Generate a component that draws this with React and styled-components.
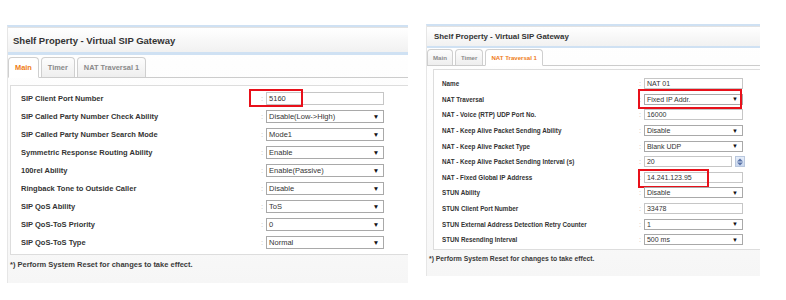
import React from 'react';
import styled, { createGlobalStyle } from 'styled-components';

const GlobalStyle = createGlobalStyle`
  body {
    margin: 0;
    background: #ffffff;
    font-family: 'Liberation Sans', Arial, sans-serif;
    color: #333333;
  }
`;

const LEFT = {
  width: 400,
  top: 25,
  left: 7,
  headerH: 24,
  blue: 3,
  titleSize: 9.5,
  titlePad: 5,
  tabsGap: 2,
  tabH: 19,
  tabFont: 7.4,
  tabPad: 6,
  boxTop: 7,
  boxSide: 2,
  rowH: 18,
  boxPadTop: 3,
  boxPadBottom: 3,
  labelSize: 7.5,
  labelPad: 10,
  labelCol: 250,
  inputW: 118,
  inputH: 13,
  valueFont: 7.5,
  footFont: 7.5,
  footPad: 5,
};

const RIGHT = {
  width: 333,
  top: 24,
  left: 18,
  headerH: 19,
  blue: 2,
  titleSize: 7.9,
  titlePad: 7,
  tabsGap: 1,
  tabH: 15,
  tabFont: 6.1,
  tabPad: 5,
  boxTop: 3,
  boxSide: 6,
  rowH: 15.6,
  boxPadTop: 6,
  boxPadBottom: 1,
  labelSize: 6.3,
  labelPad: 8,
  labelCol: 205,
  inputW: 99,
  inputH: 11,
  valueFont: 7,
  footFont: 6.8,
  footPad: 5,
};

const Page = styled.div`
  display: flex;
  align-items: flex-start;
  height: 300px;
  overflow: hidden;
`;

const Panel = styled.div`
  width: ${(p) => p.$c.width}px;
  margin-top: ${(p) => p.$c.top}px;
  margin-left: ${(p) => p.$c.left}px;
  background: linear-gradient(#ffffff, #fafafa 70%, #f6f6f6);
  border-top: 2px solid #cfe1f3;
  border-left: 1px solid #e6e6e6;
  padding-bottom: 14px;
`;

const Header = styled.div`
  height: ${(p) => p.$c.headerH}px;
  display: flex;
  align-items: center;
  padding-left: ${(p) => p.$c.titlePad}px;
  background: linear-gradient(#ffffff, #f1f1f1);
  border-bottom: ${(p) => p.$c.blue}px solid #cfe1f3;
  border-top: 1px solid #e2e2e2;
  font-size: ${(p) => p.$c.titleSize}px;
  font-weight: bold;
  color: #333;
`;

const Tabs = styled.div`
  display: flex;
  align-items: flex-end;
  gap: 2px;
  margin-top: ${(p) => p.$c.tabsGap}px;
  border-bottom: 1px solid #cccccc;
`;

const Tab = styled.div`
  height: ${(p) => p.$c.tabH}px;
  padding: 0 ${(p) => p.$c.tabPad}px;
  display: flex;
  align-items: center;
  font-size: ${(p) => p.$c.tabFont}px;
  font-weight: bold;
  color: ${(p) => (p.$active ? '#ef7d16' : '#8a8a8a')};
  background: ${(p) => (p.$active ? '#ffffff' : 'linear-gradient(#fdfdfd, #eeeeee)')};
  border: 1px solid #cfcfcf;
  border-bottom: ${(p) => (p.$active ? '1px solid #ffffff' : 'none')};
  border-radius: 4px 4px 0 0;
  margin-bottom: ${(p) => (p.$active ? '-1px' : '0')};
`;

const Box = styled.div`
  margin: ${(p) => p.$c.boxTop}px 0 0 ${(p) => p.$c.boxSide}px;
  background: #ffffff;
  border: 1px solid #dddddd;
  border-right: none;
  padding: ${(p) => p.$c.boxPadTop}px 0 ${(p) => p.$c.boxPadBottom}px;
`;

const Row = styled.div`
  display: grid;
  grid-template-columns: ${(p) => p.$c.labelCol}px auto;
  align-items: stretch;
  height: ${(p) => p.$c.rowH}px;
`;

const Label = styled.div`
  display: flex;
  align-items: center;
  padding-left: ${(p) => p.$c.labelPad}px;
  font-size: ${(p) => p.$c.labelSize}px;
  font-weight: bold;
  color: #333;
  white-space: nowrap;
`;

const Value = styled.div`
  position: relative;
  display: flex;
  align-items: center;
  gap: 3px;
  font-size: ${(p) => p.$c.valueFont}px;
`;

const Colon = styled.span`
  color: #b5b5b5;
  font-size: ${(p) => p.$c.valueFont}px;
`;

const Field = styled.div`
  width: ${(p) => p.$w}px;
  height: ${(p) => p.$c.inputH}px;
  box-sizing: border-box;
  border: 1px solid ${(p) => (p.$select ? '#a9a9a9' : '#c6c6c6')};
  background: #ffffff;
  display: flex;
  align-items: center;
  justify-content: space-between;
  padding: 0 4px 0 2px;
  font-size: ${(p) => p.$c.valueFont}px;
  color: #333;
  white-space: nowrap;
`;

const Arrow = styled.span`
  font-size: ${(p) => p.$c.valueFont - 1}px;
  color: #111;
`;

const Spinner = styled.div`
  width: 10px;
  height: ${(p) => p.$c.inputH}px;
  box-sizing: border-box;
  border: 1px solid #b9c7dd;
  background: linear-gradient(#e6eefa, #c9d7ee);
  display: flex;
  flex-direction: column;
  align-items: center;
  justify-content: center;
`;

const Highlight = styled.div`
  position: absolute;
  left: ${(p) => p.$x}px;
  top: calc(50% + ${(p) => p.$y}px);
  width: ${(p) => p.$w}px;
  height: ${(p) => p.$h}px;
  border: 2px solid #e8101a;
  box-sizing: border-box;
  pointer-events: none;
`;

const Footer = styled.div`
  padding: ${(p) => p.$c.footPad}px 0 0 2px;
  font-size: ${(p) => p.$c.footFont}px;
  font-weight: bold;
  color: #3a3a3a;
`;

const leftRows = [
  { label: 'SIP Client Port Number', value: '5160', mark: { x: -12, y: -9, w: 54, h: 18 } },
  { label: 'SIP Called Party Number Check Ability', value: 'Disable(Low->High)', select: true },
  { label: 'SIP Called Party Number Search Mode', value: 'Mode1', select: true },
  { label: 'Symmetric Response Routing Ability', value: 'Enable', select: true },
  { label: '100rel Ability', value: 'Enable(Passive)', select: true },
  { label: 'Ringback Tone to Outside Caller', value: 'Disable', select: true },
  { label: 'SIP QoS Ability', value: 'ToS', select: true },
  { label: 'SIP QoS-ToS Priority', value: '0', select: true },
  { label: 'SIP QoS-ToS Type', value: 'Normal', select: true },
];

const rightRows = [
  { label: 'Name', value: 'NAT 01' },
  { label: 'NAT Traversal', value: 'Fixed IP Addr.', select: true, mark: { x: -1, y: -10, w: 104, h: 20 } },
  { label: 'NAT - Voice (RTP) UDP Port No.', value: '16000' },
  { label: 'NAT - Keep Alive Packet Sending Ability', value: 'Disable', select: true },
  { label: 'NAT - Keep Alive Packet Type', value: 'Blank UDP', select: true },
  { label: 'NAT - Keep Alive Packet Sending Interval (s)', value: '20', spin: true },
  { label: 'NAT - Fixed Global IP Address', value: '14.241.123.95', mark: { x: -1, y: -8, w: 71, h: 19 } },
  { label: 'STUN Ability', value: 'Disable', select: true },
  { label: 'STUN Client Port Number', value: '33478' },
  { label: 'STUN External Address Detection Retry Counter', value: '1', select: true },
  { label: 'STUN Resending Interval', value: '500 ms', select: true },
];

function Gateway({ c, active, rows }) {
  const tabs = ['Main', 'Timer', 'NAT Traversal 1'];
  return (
    <Panel $c={c}>
      <Header $c={c}>Shelf Property - Virtual SIP Gateway</Header>
      <Tabs $c={c}>
        {tabs.map((t, i) => (
          <Tab key={t} $c={c} $active={i === active}>
            {t}
          </Tab>
        ))}
      </Tabs>
      <Box $c={c}>
        {rows.map((r) => (
          <Row key={r.label} $c={c}>
            <Label $c={c}>{r.label}</Label>
            <Value $c={c}>
              <Colon $c={c}>:</Colon>
              {r.spin ? (
                <>
                  <Field $c={c} $w={c.inputW - 11}>
                    {r.value}
                  </Field>
                  <Spinner $c={c}>
                    <svg width="6" height="8" viewBox="0 0 6 8">
                      <path d="M0 3.5 L3 0.5 L6 3.5 Z" fill="#5a74a8" />
                      <path d="M0 4.5 L3 7.5 L6 4.5 Z" fill="#5a74a8" />
                    </svg>
                  </Spinner>
                </>
              ) : (
                <Field $c={c} $w={c.inputW} $select={r.select}>
                  <span>{r.value}</span>
                  {r.select && <Arrow $c={c}>▼</Arrow>}
                </Field>
              )}
              {r.mark && <Highlight $x={r.mark.x} $y={r.mark.y} $w={r.mark.w} $h={r.mark.h} />}
            </Value>
          </Row>
        ))}
      </Box>
      <Footer $c={c}>*) Perform System Reset for changes to take effect.</Footer>
    </Panel>
  );
}

export default function App() {
  return (
    <>
      <GlobalStyle />
      <Page>
        <Gateway c={LEFT} active={0} rows={leftRows} />
        <Gateway c={RIGHT} active={2} rows={rightRows} />
      </Page>
    </>
  );
}
